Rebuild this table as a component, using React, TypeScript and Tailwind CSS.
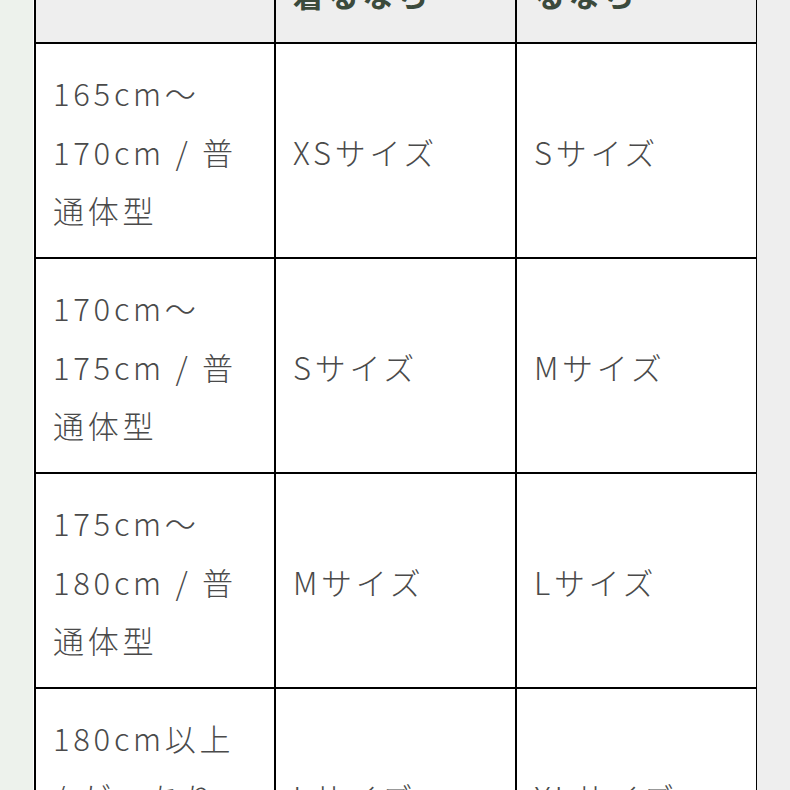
import React from "react";

const rows = [
  { a: ["165cm〜", "170cm / 普", "通体型"], b: "XSサイズ", c: "Sサイズ" },
  { a: ["170cm〜", "175cm / 普", "通体型"], b: "Sサイズ", c: "Mサイズ" },
  { a: ["175cm〜", "180cm / 普", "通体型"], b: "Mサイズ", c: "Lサイズ" },
  { a: ["180cm以上", "/ がっちり", "体型"], b: "Lサイズ", c: "XLサイズ" },
];

const font = { fontFamily: '"Noto Sans CJK JP", "Noto Sans", sans-serif' };

const cell =
  "border-[2px] border-black px-[17px] pt-[20px] pb-[17.5px] align-middle text-[31px] leading-[58.5px] font-light tracking-[0.12em] text-[#4a4a4a]";
const head =
  "border-[2px] border-black px-[17px] py-[19px] text-left align-top text-[31px] leading-[58px] font-bold tracking-[0.12em] text-[#3b4a3c]";

export default function App() {
  return (
    <div className="flex w-[790px] h-[790px] overflow-hidden bg-white" style={font}>
      <div className="w-[33px] shrink-0 bg-[#edf2ec]" />
      <div className="w-[724px] shrink-0 overflow-hidden pl-[1px]">
        <table className="mt-[-114px] w-[722px] table-fixed border-collapse">
          <colgroup>
            <col className="w-[240px]" />
            <col className="w-[241px]" />
            <col className="w-[241px]" />
          </colgroup>
          <thead>
            <tr className="bg-[#eeeeee]">
              <th className={head} />
              <th className={head}>
                <div>ジャストで</div>
                <div>着るなら</div>
              </th>
              <th className={head}>
                <div>ゆったり着</div>
                <div>るなら</div>
              </th>
            </tr>
          </thead>
          <tbody>
            {rows.map((r, i) => (
              <tr key={i} className="bg-white">
                <td className={cell}>
                  {r.a.map((l, j) => (
                    <div key={j} className="whitespace-pre">{l}</div>
                  ))}
                </td>
                <td className={cell}>{r.b}</td>
                <td className={cell}>{r.c}</td>
              </tr>
            ))}
          </tbody>
        </table>
      </div>
      <div className="flex-1 bg-[#eeeeee]" />
    </div>
  );
}
